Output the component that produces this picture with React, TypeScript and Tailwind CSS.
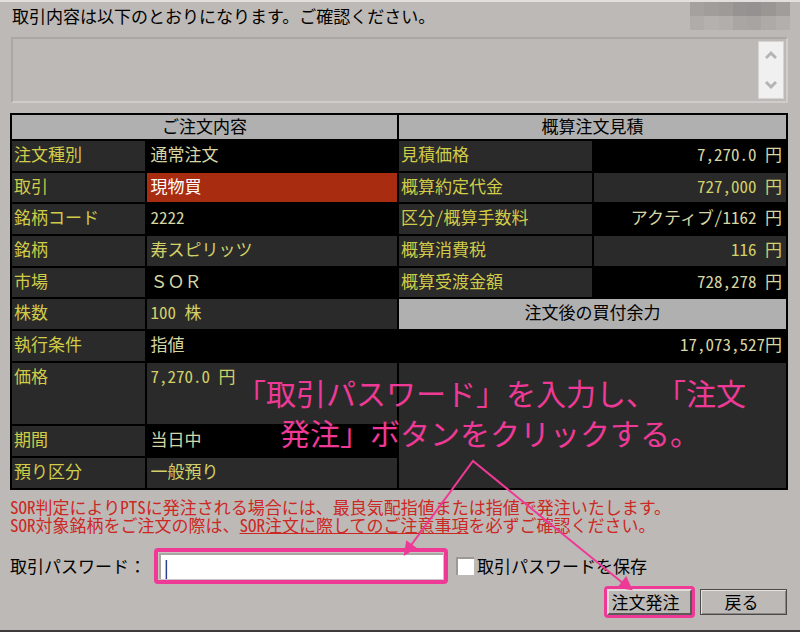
import { ReactNode } from "react";

const mosaic = [
  "bg-[#a5a19f]", "bg-[#a19d9b]", "bg-[#9e9a98]", "bg-[#979391]", "bg-[#959190]", "bg-[#9a9694]", "bg-[#a19d9b]",
  "bg-[#b0acaa]", "bg-[#b5b1af]", "bg-[#b2aeac]", "bg-[#aaa6a4]", "bg-[#a8a4a2]", "bg-[#adaaa7]", "bg-[#b3afad]",
];

type Row = { label: string; value: string; kind?: "red" | "tall" | "wide" };

const order: Row[] = [
  { label: "注文種別", value: "通常注文" },
  { label: "取引", value: "現物買", kind: "red" },
  { label: "銘柄コード", value: "2222" },
  { label: "銘柄", value: "寿スピリッツ" },
  { label: "市場", value: "ＳＯＲ", kind: "wide" },
  { label: "株数", value: "100 株" },
  { label: "執行条件", value: "指値" },
  { label: "価格", value: "7,270.0 円", kind: "tall" },
  { label: "期間", value: "当日中" },
  { label: "預り区分", value: "一般預り" },
];

const estimate: Row[] = [
  { label: "見積価格", value: "7,270.0 円" },
  { label: "概算約定代金", value: "727,000 円" },
  { label: "区分/概算手数料", value: "アクティブ/1162 円" },
  { label: "概算消費税", value: "116 円" },
  { label: "概算受渡金額", value: "728,278 円" },
];

function Head({ children, span }: { children: ReactNode; span: number }) {
  return (
    <th colSpan={span} className="border-b-2 border-r-2 border-black bg-[#b0b0b0] p-0 text-center font-normal text-black">
      {children}
    </th>
  );
}

function Body({ rows, right }: { rows: Row[]; right?: boolean }) {
  return (
    <tbody>
      {rows.map((r, i) => {
        const grey = i % 2 === 1;
        const tone = r.kind === "red"
          ? "bg-[#a82c10] text-white"
          : grey ? "bg-[#2a2a2a] text-[#d2d068]" : "bg-black text-[#d6d6a4]";
        return (
          <tr key={r.label} className={r.kind === "tall" ? "h-[63px] align-top" : i % 3 === 1 ? "h-[31px] align-top" : "h-8 align-top"}>
            <th scope="row" className="border-b-2 border-r-2 border-black bg-[#2a2a2a] py-0 pl-[2px] pr-0 text-left font-normal text-[#d0cc48]">
              {r.label}
            </th>
            <td className={`border-b-2 border-r-2 border-black py-0 pl-[3px] pr-1 ${right ? "text-right" : "text-left"} ${r.kind === "wide" ? "[font-feature-settings:normal]" : ""} ${tone}`}>
              {r.value}
            </td>
          </tr>
        );
      })}
    </tbody>
  );
}

function Chevron({ d }: { d: string }) {
  return (
    <svg viewBox="0 0 12 10" className="h-[10px] w-3" fill="none" stroke="#b4b4b4" strokeWidth="3">
      <path d={d} />
    </svg>
  );
}

export default function App() {
  return (
    <main className="relative min-h-[632px] border-b-2 border-t-2 border-b-[#3c3a3a] border-t-[#e2dfdc] bg-[#bdb9b6] pl-[10px] pr-3 font-['Noto_Sans_CJK_JP',sans-serif] text-[17px] leading-[26px] text-black [font-feature-settings:'hwid']">
      <header className="flex h-[35px] justify-between">
        <p className="pl-[2px] leading-7">取引内容は以下のとおりになります。ご確認ください。</p>
        <div aria-hidden="true" className="-mr-[2px] grid h-7 w-[100px] grid-cols-7">
          {mosaic.map((c, i) => <span key={i} className={c} />)}
        </div>
      </header>

      <div className="ml-px flex h-[66px] border-2 border-b-[#d0ccc9] border-l-[#aba7a4] border-r-[#d0ccc9] border-t-[#aba7a4]">
        <textarea readOnly aria-label="メッセージ" className="min-w-0 flex-1 resize-none bg-transparent outline-none" />
        <div className="my-[2px] mr-[2px] flex w-[26px] flex-col justify-between border border-[#d6d3d1] bg-[#f0f0f0] py-2">
          <button type="button" aria-label="上へ" className="flex justify-center"><Chevron d="M1 8 L6 3 L11 8" /></button>
          <button type="button" aria-label="下へ" className="flex justify-center"><Chevron d="M1 2 L6 7 L11 2" /></button>
        </div>
      </div>

      <div className="mt-[10px] grid grid-cols-[387fr_389fr] border-l-2 border-t-2 border-black bg-black">
        <table className="w-full table-fixed border-separate border-spacing-0">
          <colgroup><col className="w-[35%]" /><col /></colgroup>
          <thead><tr className="h-[26px] align-top leading-[22px]"><Head span={2}>ご注文内容</Head></tr></thead>
          <Body rows={order} />
        </table>
        <div className="flex flex-col">
          <table className="w-full table-fixed border-separate border-spacing-0">
            <thead><tr className="h-[26px] align-top leading-[22px]"><Head span={2}>概算注文見積</Head></tr></thead>
            <Body rows={estimate} right />
          </table>
          <table className="w-full border-separate border-spacing-0">
            <thead><tr className="h-8 align-top"><Head span={1}>注文後の買付余力</Head></tr></thead>
            <tbody>
              <tr className="h-8 align-top">
                <td className="border-b-2 border-r-2 border-black bg-black py-0 pr-1 text-right text-[#d6d6a4]">17,073,527円</td>
              </tr>
            </tbody>
          </table>
          <div className="flex-1 border-b-2 border-r-2 border-black bg-[#2a2a2a]" />
        </div>
      </div>

      <p className="mt-2 whitespace-nowrap leading-[18px] text-[#cc2824]">
        SOR判定によりPTSに発注される場合には、最良気配指値または指値で発注いたします。<br />
        SOR対象銘柄をご注文の際は、<a href="#notice" className="underline">SOR注文に際してのご注意事項</a>を必ずご確認ください。
      </p>

      <form className="mt-[14px]" onSubmit={(e) => e.preventDefault()}>
        <div className="flex items-center">
          <label htmlFor="password" className="w-[144px] whitespace-nowrap [font-feature-settings:normal]">取引パスワード：</label>
          <div className="flex h-9 w-[294px] rounded-[4px] border-4 border-[#ee3a96] bg-[#c8c4c2] p-px">
            <input id="password" type="text" defaultValue="|" className="min-w-0 flex-1 border-l-2 border-t-2 border-[#aaa6a4] bg-white pl-px text-[17px] outline-none" />
          </div>
          <input id="save" type="checkbox" className="ml-2 size-[18px] appearance-none border-l-2 border-t-2 border-[#9c9896] bg-white" />
          <label htmlFor="save" className="ml-[3px]">取引パスワードを保存</label>
        </div>
        <div className="mr-px mt-[2px] flex justify-end gap-[5px]">
          <div className="flex h-8 w-[91px] rounded-[4px] border-[3px] border-[#ee3a96]">
            <button type="submit" className="flex-1 whitespace-nowrap border-2 border-b-[#5c5a58] border-l-[#e0dcda] border-r-[#5c5a58] border-t-[#e0dcda] pr-2 leading-5">注文発注</button>
          </div>
          <button type="button" className="my-[3px] h-[26px] w-[87px] border border-[#4c4a48] pr-1 leading-5 shadow-[inset_1px_1px_0_#e6e2e0,inset_-1px_-1px_0_#8a8684]">戻る</button>
        </div>
      </form>

      <p className="absolute left-[236px] top-[370px] whitespace-nowrap text-[30px] leading-10 text-[#ee3a96]">
        「取引パスワード」を入力し、「注文<br />
        <span className="pl-11">発注」ボタンをクリックする。</span>
      </p>
      <svg aria-hidden="true" className="pointer-events-none absolute left-[400px] top-[456px] h-[136px] w-[240px]" viewBox="400 458 240 136" fill="none" stroke="#ee3a96" strokeWidth="2">
        <path d="M409 548 L473 461 L624 584" />
        <path d="M405 554 L407 542 L415 548 Z M631 589 L619 587 L626 578 Z" fill="#ee3a96" />
      </svg>
    </main>
  );
}
